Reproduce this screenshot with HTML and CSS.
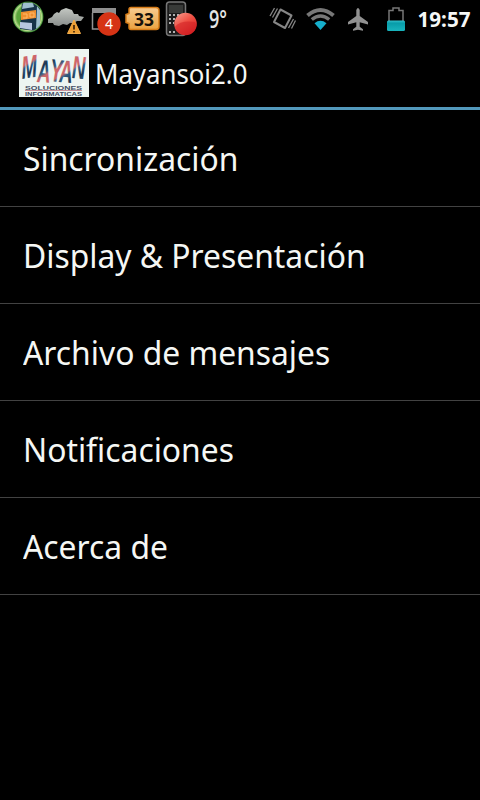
FILE: index.html
```
<!DOCTYPE html>
<html lang="es">
<head>
<meta charset="utf-8">
<title>Mayansoi2.0</title>
<link rel="stylesheet" href="styles.css">
</head>
<body>
<div class="status">
<svg class="status-icons" width="480" height="39" viewBox="0 0 480 39">
  <defs>
    <radialGradient id="orb" cx=".5" cy=".5" r=".5"><stop offset=".72" stop-color="#5aa53c"/><stop offset=".88" stop-color="#b9dc8c"/><stop offset="1" stop-color="#287c25"/></radialGradient>
    <linearGradient id="cloud" x2="0" y2="1"><stop stop-color="#c3c7c2"/><stop offset="1" stop-color="#8a8e8c"/></linearGradient>
    <linearGradient id="amber" x2="0" y2="1"><stop stop-color="#f8cc91"/><stop offset="1" stop-color="#eba241"/></linearGradient>
    <linearGradient id="teal" x2="0" y2="1"><stop stop-color="#35c2cd"/><stop offset=".25" stop-color="#079ca9"/><stop offset="1" stop-color="#19b4bd"/></linearGradient>
    <linearGradient id="ball" x2=".7" y2="1"><stop stop-color="#f7a092"/><stop offset=".5" stop-color="#ef5144"/><stop offset="1" stop-color="#d51d21"/></linearGradient>
    <clipPath id="disc"><circle cx="28" cy="17" r="14.500"/></clipPath>
  </defs>
  <circle cx="28" cy="17" r="15.500" fill="url(#orb)"/>
  <g clip-path="url(#disc)">
    <path d="M22 2h14l4 4v20l-4 5-16-2z" fill="#173349"/>
    <path d="M23 3h10l1 4-12 2zM37 6l3 4v16l-4 3z" fill="#9fc0cf"/>
    <path d="M21 12l15-2v8l-15 2z" fill="#ee8f2e"/>
    <path d="M23 14h4v4h-4M30 13h4v4h-4v-4" fill="none" stroke="#ffb868"/>
    <path d="M20 22l12 1v7l-12-2z" fill="#b7c6e0"/>
  </g>
  <path d="M48 19l4-2 2-3 3-2 2 1 2-3 5-2 6 2 2 4 4 0 1 2 5 1-3 4-4 0-3 2-4 0-3 2-4-1-4 2-5-1-1-2-5 0z" fill="url(#cloud)"/>
  <path d="M74 20l-6.500 13.500h13z" fill="#ef9f32" stroke="#f3ad4b" stroke-linejoin="round"/>
  <path d="M74 25v4.500M74 31v1.500" stroke="#422509" stroke-width="1.700"/>
  <path d="M92.500 13v16h22" fill="none" stroke="#929292" stroke-width="1.500"/>
  <path d="M92 8h24v5H92zM114 12h2v10h-2z" fill="#8f8f8f"/>
  <circle cx="109" cy="24" r="11.700" fill="#d63315"/>
  <text x="109" y="29" class="badge-number">4</text>
  <path d="M131 7.500h25q3 0 3 3v16q0 3-3 3h-25q-2 0-2-2v-4l-3-1v-8l3-1v-4q0-2 2-2z" fill="url(#amber)" stroke="#d87d19" stroke-width="1.500"/>
  <text x="144" y="25.500" class="battery-number" textLength="20" lengthAdjust="spacingAndGlyphs">33</text>
  <rect x="166.500" y="2" width="19" height="33.500" rx="3" fill="#1b1b1b" stroke="#777" stroke-width="1.500"/>
  <path d="M169 5h14v8h-14z" fill="#383a38"/>
  <path d="M169 15h12M169 19h7M169 23h5M169 32h8" stroke="#b1b1b1" stroke-width="2" stroke-dasharray="2 2"/>
  <circle cx="185.500" cy="24" r="11.300" fill="url(#ball)"/>
  <path d="M174.700 27q6-7 20-5l2 3q-2 9-11 10-9 0-11-8z" fill="#cf2024" opacity=".55"/>
  <text x="209" y="28" class="temperature" textLength="18" lengthAdjust="spacingAndGlyphs">9°</text>
  <g fill="none" stroke="#868686" stroke-width="1.300">
    <path d="M280.500 9.500l11 6-6.500 12.500-11-6z" stroke-width="2" stroke-linejoin="round"/>
    <path d="M274.500 8l-4.500 8M277.500 8.500l-5 9M288.500 28l5-9M291.500 28.500l4-8"/>
  </g>
  <g fill="none" stroke="#777">
    <path d="M307.500 15.500q13-11 26 0" stroke-width="4"/>
    <path d="M311.800 19.500q8.700-7 17.400 0" stroke-width="3.500"/>
  </g>
  <path d="M314.500 23.200q6-4.800 12 0l-6 6.800z" fill="#16aecb"/>
  <path d="M356.300 10q1.700-4 3.400 0v6l8.300 6v2.500l-8.300-2.300v4.500l3.300 2.500v1.500l-5-1-5 1v-1.500l3.300-2.500v-4.500l-8.300 2.300V22l8.300-6z" fill="#919191"/>
  <path d="M389 21V10.500h4v-2.500h6v2.500h4V21" fill="none" stroke="#777" stroke-width="1.500"/>
  <rect x="387" y="20.500" width="18" height="10.500" rx="1.500" fill="url(#teal)"/>
  <text x="417.500" y="27" class="clock" textLength="53" lengthAdjust="spacingAndGlyphs">19:57</text>
</svg>
</div>
<header class="bar">
  <svg class="logo" width="70" height="48" viewBox="0 0 70 48">
    <defs><linearGradient id="brush" x2=".18" y2=".2" spreadMethod="reflect"><stop stop-color="#1d3450"/><stop offset=".5" stop-color="#315d83"/><stop offset=".7" stop-color="#c9676a"/><stop offset="1" stop-color="#d0656a"/></linearGradient></defs>
    <rect width="70" height="48" fill="#edf5f1"/>
    <text class="brush" fill="url(#brush)" transform="scale(.58 1)" x="5 31 53 69 91" y="30 33 32 33 29" rotate="-5 2 4 3 3">MAYAN</text>
    <text class="logo-caption" x="6" y="40.500" textLength="57" lengthAdjust="spacingAndGlyphs">SOLUCIONES</text>
    <path d="M6 41.500h57" stroke="#b66572" stroke-width=".7"/>
    <text class="logo-caption" x="6" y="46.700" textLength="57" lengthAdjust="spacingAndGlyphs">INFORMATICAS</text>
  </svg>
  <h1 class="title">Mayansoi2.0</h1>
</header>
<ul class="list">
  <li><span>Sincronización</span></li>
  <li><span>Display &amp; Presentación</span></li>
  <li><span>Archivo de mensajes</span></li>
  <li><span>Notificaciones</span></li>
  <li><span>Acerca de</span></li>
</ul>
</body>
</html>
```
FILE: styles.css
```
* { box-sizing: border-box; }
body {
  margin: 0;
  height: 800px;
  overflow: hidden;
  background: #000;
  color: #f5f7f4;
  font-family: "Noto Sans", sans-serif;
}
.status { height: 39px; }
.status-icons { display: block; }
.badge-number { font-size: 14px; fill: #fff; text-anchor: middle; }
.battery-number { font-size: 18px; font-weight: 700; fill: #16100a; text-anchor: middle; }
.temperature { font: 600 26px "Open Sans", sans-serif; fill: #e4e4e4; }
.clock { font-size: 20.500px; font-weight: 700; fill: #f5f7f6; }
.bar {
  display: flex;
  align-items: center;
  height: 71px;
  padding: 0 19px;
  gap: 6px;
  border-bottom: 3px solid #5298bb;
}
.logo { flex: none; }
.brush { font: italic 700 32px "Liberation Sans", sans-serif; }
.logo-caption { font: 700 5.500px "Liberation Sans", sans-serif; fill: #414c62; }
.title {
  margin: 0;
  padding-top: 2px;
  font-size: 27px;
  font-weight: 400;
  line-height: 36px;
  transform: scaleX(0.955);
  transform-origin: left;
}
.list { margin: 0; padding: 0; list-style: none; }
.list li {
  height: 97px;
  padding: 1px 23px 0;
  border-bottom: 1px solid #424242;
  font-size: 33px;
  line-height: 96px;
  white-space: nowrap;
}
.list span {
  display: inline-block;
  transform: scaleX(0.964);
  transform-origin: left;
}
```
